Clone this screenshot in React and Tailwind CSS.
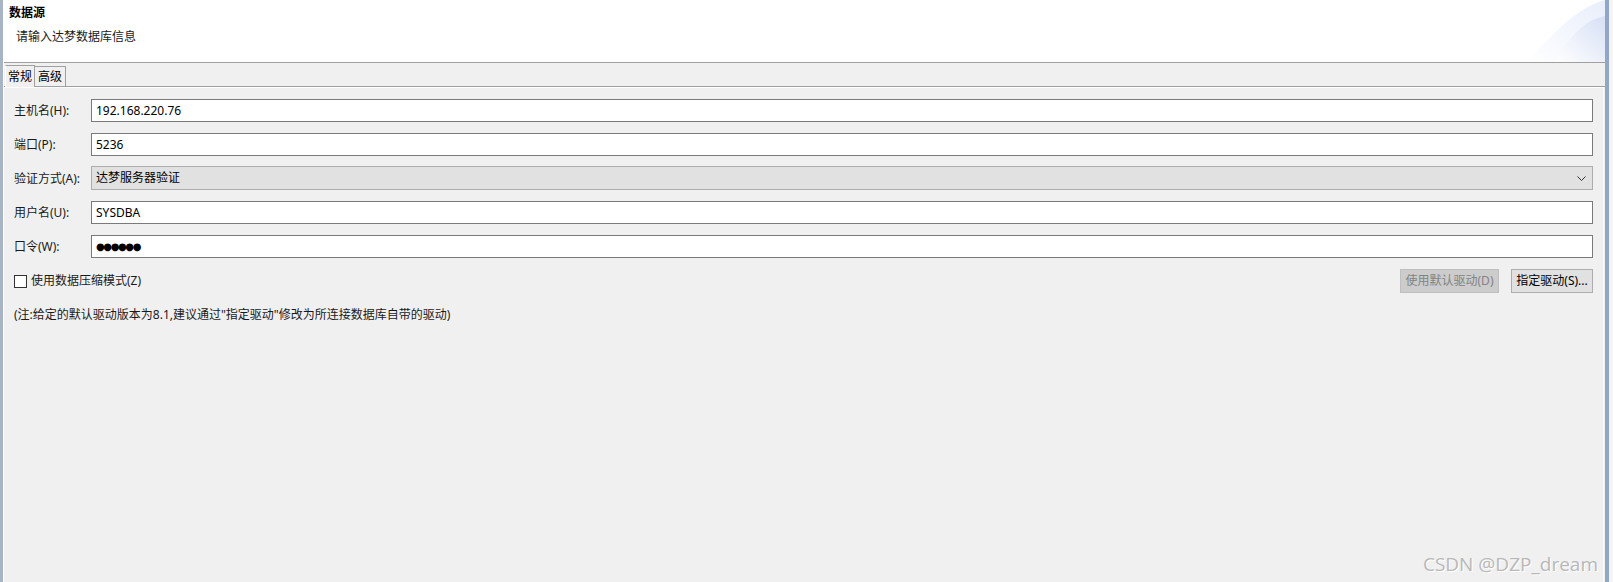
import React from 'react';

const font = {fontFamily: '"Noto Sans", "Noto Sans CJK SC", sans-serif'};

function Field({label, children}) {
	return (
		<div className="flex items-center h-[23px]">
			<div className="w-[77px] text-[12px] text-[#1a1a1a] leading-none">{label}</div>
			<div className="flex-1 h-full">{children}</div>
		</div>
	);
}

function TextBox({value, dots}) {
	return (
		<div className="h-full bg-white border border-[#7a7a7a] flex items-center px-[4px]">
			{dots ? (
				<span className="text-[10px] tracking-[-1.4px] text-black leading-none" style={{fontFamily: '"DejaVu Sans", sans-serif'}}>{value}</span>
			) : (
				<span className="text-[12px] text-black leading-none">{value}</span>
			)}
		</div>
	);
}

export default function App() {
	return (
		<div className="w-[1613px] h-[582px] flex bg-[#f0f0f0] overflow-hidden relative" style={font}>
			<div className="w-[3px] h-full bg-[#a6b4c8]" />
			<div className="w-[1602px] h-full flex flex-col border-l border-white">
				{/* header */}
				<div className="h-[62px] bg-white relative shrink-0">
					<div className="pl-[5px] pt-[5px] text-[12px] font-bold text-black leading-[16px]">数据源</div>
					<div className="pl-[12px] pt-[8px] text-[12px] text-[#1a1a1a] leading-[16px]">请输入达梦数据库信息</div>
					<svg className="absolute right-0 top-0" width="80" height="62" viewBox="0 0 80 62">
						<defs>
							<linearGradient id="g1" x1="0" y1="1" x2="1" y2="0">
								<stop offset="0" stopColor="#ffffff" />
								<stop offset="1" stopColor="#d6e0f5" />
							</linearGradient>
							<linearGradient id="g2" x1="0" y1="1" x2="1" y2="0">
								<stop offset="0" stopColor="#ffffff" />
								<stop offset="1" stopColor="#e8eefb" />
							</linearGradient>
						</defs>
						<path d="M0 62 C 25 40, 45 10, 80 0 L 80 62 Z" fill="url(#g2)" />
						<path d="M30 62 C 45 35, 60 20, 80 16 L 80 62 Z" fill="url(#g1)" />
					</svg>
				</div>
				<div className="h-px bg-[#a0a0a0] shrink-0" />
				{/* tab strip */}
				<div className="h-[23px] flex items-end pl-[1px] shrink-0">
					<div className="h-[22px] px-[2px] bg-[#f0f0f0] border-t border-l border-r border-[#a0a0a0] border-l-white flex items-center text-[12px] text-black leading-none relative -mb-px z-10">
						常规
					</div>
					<div className="h-[20px] px-[3px] border-t border-r border-[#a0a0a0] flex items-center text-[12px] text-black leading-none">
						高级
					</div>
				</div>
				<div className="h-px bg-[#a0a0a0] shrink-0" />
				{/* body */}
				<div className="flex-1 flex flex-col border-t border-white pl-[10px] pr-[10px] pt-[11px] mr-px" style={{borderRight: '1px solid #fafafa'}}>
					<div className="flex flex-col gap-[11px]">
						<Field label="主机名(H):"><TextBox value="192.168.220.76" /></Field>
						<Field label="端口(P):"><TextBox value="5236" /></Field>
						<Field label="验证方式(A):">
							<div className="h-[24px] -mt-px bg-[#e1e1e1] border border-[#adadad] flex items-center justify-between pl-[4px] pr-[6px]">
								<span className="text-[12px] text-black leading-none">达梦服务器验证</span>
								<svg width="9" height="5" viewBox="0 0 9 5">
									<path d="M0.5 0.5 L4.5 4.5 L8.5 0.5" stroke="#333" strokeWidth="1" fill="none" />
								</svg>
							</div>
						</Field>
						<Field label="用户名(U):"><TextBox value="SYSDBA" /></Field>
						<Field label="口令(W):"><TextBox value="●●●●●●" dots /></Field>
					</div>
					<div className="flex items-center justify-between mt-[11px] h-[24px]">
						<label className="flex items-center gap-[4px]">
							<span className="w-[13px] h-[13px] border border-[#333] bg-white" />
							<span className="text-[12px] text-[#1a1a1a] leading-none">使用数据压缩模式(Z)</span>
						</label>
						<div className="flex gap-[12px]">
							<button disabled className="h-[24px] w-[99px] bg-[#cccccc] border border-[#bfbfbf] text-[12px] text-[#838383] leading-none">使用默认驱动(D)</button>
							<button className="h-[24px] w-[82px] bg-[#e1e1e1] border border-[#adadad] text-[12px] text-black leading-none">指定驱动(S)...</button>
						</div>
					</div>
					<div className="mt-[14px] text-[12px] text-[#1a1a1a] leading-[16px]">
						(注:给定的默认驱动版本为8.1,建议通过"指定驱动"修改为所连接数据库自带的驱动)
					</div>
				</div>
			</div>
			<div className="w-[4px] h-full bg-[#93a7c4]" />
			<div className="w-[4px] h-full bg-[#f4f4f4]" />
			<div className="absolute right-[15px] bottom-[8px] text-[19px] text-[#b8b8b8] leading-none" style={{fontFamily: '"Open Sans", "Noto Sans", sans-serif', textShadow: '1px 1px 0 #ffffff'}}>
				CSDN @DZP_dream
			</div>
		</div>
	);
}
